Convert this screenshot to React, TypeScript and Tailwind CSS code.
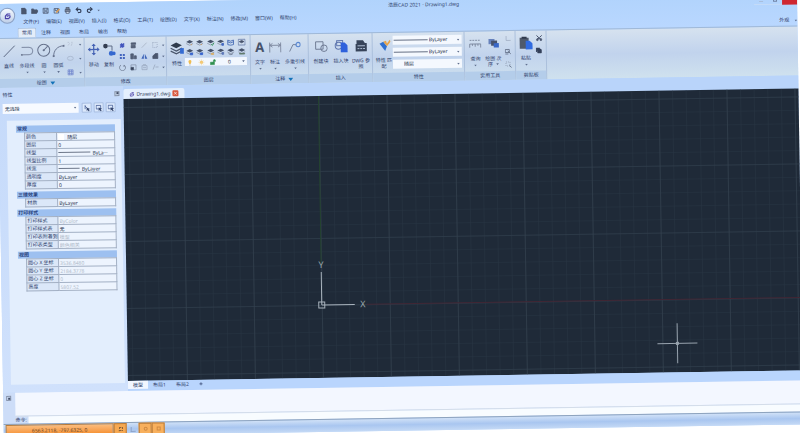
import type { ReactNode } from 'react';
import { Copy, Plus, Redo2, Scissors, Undo2 } from 'lucide-react';

const menus = ['文件(F)', '编辑(E)', '视图(V)', '插入(I)', '格式(O)', '工具(T)', '绘图(D)', '文字(X)', '标注(N)', '修改(M)', '窗口(W)', '帮助(H)'];
const ribbonTabs = ['常用', '注释', '视图', '布局', '输出', '帮助'];

type PropRow = { name: string; value: string; muted?: boolean; swatch?: boolean; line?: 'long' | 'short' };

const propertyGroups: { title: string; rows: PropRow[] }[] = [
  {
    title: '常规',
    rows: [
      { name: '颜色', value: '随层', swatch: true },
      { name: '图层', value: '0' },
      { name: '线型', value: 'ByLa···', line: 'long' },
      { name: '线型比例', value: '1' },
      { name: '线宽', value: 'ByLayer', line: 'short' },
      { name: '透明度', value: 'ByLayer' },
      { name: '厚度', value: '0' },
    ],
  },
  { title: '三维效果', rows: [{ name: '材质', value: 'ByLayer' }] },
  {
    title: '打印样式',
    rows: [
      { name: '打印样式', value: 'ByColor', muted: true },
      { name: '打印样式表', value: '无' },
      { name: '打印表附着到', value: '模型', muted: true },
      { name: '打印表类型', value: '颜色相关', muted: true },
    ],
  },
  {
    title: '视图',
    rows: [
      { name: '圆心 X 坐标', value: '3536.8480', muted: true },
      { name: '圆心 Y 坐标', value: '2184.3778', muted: true },
      { name: '圆心 Z 坐标', value: '0', muted: true },
      { name: '高度', value: '5807.52', muted: true },
    ],
  },
];

function Arrow({ className = '' }: { className?: string }) {
  return (
    <svg viewBox="0 0 4 3" className={`h-[2px] w-[3px] shrink-0 ${className}`} aria-hidden="true">
      <path d="M0 0h4L2 3z" fill="#61708f" />
    </svg>
  );
}

function Logo({ className }: { className: string }) {
  return (
    <svg viewBox="0 0 12 12" className={className} fill="none" aria-hidden="true">
      <path d="M10.500 2H5.500L2 5.500V10h5.500l2.500-2.500V5H6L4.800 6.500" stroke="#4a3fa8" strokeWidth="2" strokeLinejoin="round" />
    </svg>
  );
}

// 功能区面板
function Group({ title, width, more, corner, children }: { title: string; width: string; more?: boolean; corner?: boolean; children: ReactNode }) {
  return (
    <section className={`flex shrink-0 flex-col border-r border-[#abc0dc] ${width}`}>
      <div className="flex flex-1 px-[2px] pt-[3px]">{children}</div>
      <h2 className={`flex h-[9px] items-center justify-center gap-[3px] bg-[#b4cdea] ${more ? 'pl-[9px]' : ''}`}>
        {title}
        {more && (
          <svg viewBox="0 0 6 4" className="h-[4px] w-[5px]" aria-hidden="true">
            <path d="M0 0h6L3 4z" fill="#1272b8" />
          </svg>
        )}
        {corner && <Arrow className="-mr-[44px] ml-[38px]" />}
      </h2>
    </section>
  );
}

function BigButton({ label, second, width, arrow, children }: { label: string; second?: string; width: string; arrow?: boolean; children: ReactNode }) {
  return (
    <button className={`flex shrink-0 flex-col items-center whitespace-nowrap ${width}`}>
      <span className="flex h-[18px] items-center">{children}</span>
      <span className="mt-[3px] leading-[6px]">{label}</span>
      {second && (
        <span className="flex items-center gap-[3px] leading-[6px]">
          {second}
          {arrow && <Arrow />}
        </span>
      )}
      {arrow && !second && <Arrow className="mt-[3px]" />}
    </button>
  );
}

function Glyph({ children, size = 'size-[7px]', label }: { children: ReactNode; size?: string; label: string }) {
  return (
    <button aria-label={label} className="flex items-center justify-center">
      <svg viewBox="0 0 14 14" className={size} fill="none" stroke="#4a566e" strokeWidth="1.500">
        {children}
      </svg>
    </button>
  );
}

function LayerStack({ tone, mark }: { tone: string; mark: ReactNode }) {
  return (
    <>
      <path d="M1 5l6-3 6 3-6 3z" fill="#46526a" stroke="none" />
      <path d="M1 8l6 3 6-3" stroke="#8b96a8" />
      <g stroke={tone} fill={tone}>{mark}</g>
    </>
  );
}

function LayerSelect() {
  return (
    <div className="flex h-[8px] items-center bg-[#f2f7fe] px-[2px]">
      <svg viewBox="0 0 60 14" className="h-[7px] w-[30px] shrink-0" aria-hidden="true">
        <path d="M6 2a3 3 0 0 1 3 3c0 2-1.500 3-1.500 5h-3C4.500 8 3 7 3 5a3 3 0 0 1 3-3z" fill="#efbd52" />
        <path d="M4.500 12h3" stroke="#888" />
        <circle cx="29" cy="7" r="3" fill="#f3bd55" />
        <path d="M29 1v12M23 7h12M25 3l8 8M33 3l-8 8" stroke="#f5cf83" />
        <path d="M47 7h8v5h-8zM53 7V4a2 2 0 0 1 4 0v2" fill="#2f8f4e" stroke="#2f8f4e" />
      </svg>
      <select aria-label="图层" defaultValue="0" className="min-w-0 flex-1 appearance-none text-center text-[#26324e] outline-none">
        <option>0</option>
      </select>
      <Arrow />
    </div>
  );
}

function StyleSelect({ label, value, line }: { label: string; value: string; line?: boolean }) {
  return (
    <div className="flex h-[9px] items-center bg-[#f4f8fe] pr-[2px] pl-[1px]">
      {line ? <span className="h-px w-[34px] bg-[#667085]" /> : <span className="w-[9px]" />}
      <select aria-label={label} defaultValue={value} className="ml-[1px] min-w-0 flex-1 appearance-none text-[#222c44] outline-none">
        <option>{value}</option>
      </select>
      <Arrow />
    </div>
  );
}

function TitleBar() {
  return (
    <div className="flex h-[14px] items-center pt-[1px]">
      <div className="flex items-center gap-[4px] pl-[2px] text-[#35415a]">
        <Glyph label="新建"><path d="M3 1h6l3 3v9H3z" fill="#4a566e" /></Glyph>
        <Glyph label="打开"><path d="M1 12V3h4l1 2h6v2M1 12l3-5h10l-3 5z" fill="#4a566e" /></Glyph>
        <Glyph label="保存"><path d="M2 2h10v10H2zM4 2v4h6V2M4 12V9h6v3" /></Glyph>
        <Glyph label="另存为"><path d="M2 3h9v9H2zM4 3v4h5V3" /><path d="M6 11l7-7" stroke="#dd9b4f" strokeWidth="3" /></Glyph>
        <Glyph label="打印"><path d="M4 5V1h6v4M2 5h10v5H2z" fill="#7a869c" /><path d="M4 9h6v4H4z" fill="#d8e4f5" /></Glyph>
        <button aria-label="撤销"><Undo2 className="size-[7px]" strokeWidth={4} /></button>
        <button aria-label="重做"><Redo2 className="size-[7px]" strokeWidth={4} /></button>
        <Arrow />
      </div>
      <h1 className="flex-1 pl-[288px]">浩辰CAD 2021 - Drawing1.dwg</h1>
      <button aria-label="最小化" className="flex h-[11px] w-[14px] items-end justify-center border-b border-[#c4dbf8] pb-[2px]">
        <span className="h-px w-[4px] bg-[#a9bedc]" />
      </button>
      <button aria-label="还原" className="flex h-[11px] w-[14px] items-end justify-center border-b border-[#c4dbf8] pb-[2px]">
        <span className="size-[4px] border border-[#7184a6]" />
      </button>
      <button aria-label="关闭" className="h-[11px] w-[15px] bg-[#cf2630]" />
    </div>
  );
}

function Ribbon() {
  return (
    <div className="flex h-[50px] shrink-0 border-t border-[#a0b9d8] bg-linear-to-b from-[#d6e2ef] via-[#c1d3ed] to-[#cfe1ee]">
      <Group title="绘图" width="w-[87px]" more>
        <BigButton label="直线" width="w-[18px]">
          <svg viewBox="0 0 14 14" className="size-[13px]"><path d="M1 13L13 1" stroke="#56627c" /></svg>
        </BigButton>
        <BigButton label="多段线" width="w-[18px]" arrow>
          <svg viewBox="0 0 14 14" className="size-[13px]" fill="none" stroke="#76829b"><path d="M1 3h8a4 4 0 0 1 0 8H1" /><path d="M0 10h2v2H0z" fill="#76829b" stroke="none" /></svg>
        </BigButton>
        <BigButton label="圆" width="w-[16px]" arrow>
          <svg viewBox="0 0 14 14" className="size-[14px]" fill="none" stroke="#66728c"><circle cx="7" cy="7" r="6" /><path d="M7 7l4-4" /><circle cx="7" cy="7" r="0.600" /></svg>
        </BigButton>
        <BigButton label="圆弧" width="w-[13px]" arrow>
          <svg viewBox="0 0 14 14" className="size-[13px]" fill="none" stroke="#66728c"><path d="M2 13C2 7 6 2 13 2" /><path d="M1 12h2v2H1zM12 1h2v2h-2z" fill="#66728c" stroke="none" /></svg>
        </BigButton>
        <div className="flex flex-1 flex-col justify-between pb-[2px] pl-[2px]">
          <span className="flex items-center gap-[5px]"><Glyph label="点"><path d="M2 3h3M9 3h3M3 9l3-4M9 10l2-5" stroke="#b3bfd2" /></Glyph><Arrow /></span>
          <span className="flex items-center gap-[5px]"><Glyph label="椭圆"><ellipse cx="7" cy="7" rx="6" ry="4" stroke="#a5b3ca" /></Glyph><Arrow /></span>
          <span className="flex items-center gap-[5px]"><Glyph label="填充"><path d="M2 2h10v10H2zM2 5h10M2 9h10M5 2v10M9 2v10" stroke="#7288ce" /></Glyph><Arrow /></span>
        </div>
      </Group>

      <Group title="修改" width="w-[82px]">
        <BigButton label="移动" width="w-[14px]">
          <svg viewBox="0 0 14 14" className="size-[12px]" fill="#4562b4" stroke="#4562b4"><path d="M7 2v10M2 7h10" strokeWidth="1.400" /><path d="M7 0l2.500 3h-5zM7 14l2.500-3h-5zM0 7l3-2.500v5zM14 7l-3-2.500v5z" stroke="none" /></svg>
        </BigButton>
        <BigButton label="复制" width="w-[16px]">
          <svg viewBox="0 0 14 14" className="size-[13px]"><circle cx="3" cy="3" r="2.500" fill="#333d50" /><path d="M5 3h5v5" fill="none" stroke="#596680" /><circle cx="9" cy="11" r="2.500" fill="#3568cf" /><circle cx="12" cy="11" r="2" fill="#3568cf" /></svg>
        </BigButton>
        <div className="grid flex-1 grid-cols-[11px_11px_11px_16px] grid-rows-3 pb-[4px]">
          <Glyph label="删除"><path d="M3 11l8-8M3 7l4-4M7 11l4-4" stroke="#4255bd" strokeWidth="3" /></Glyph>
          <Glyph label="拉伸"><path d="M3 2h9v3H3zM3 7h8v5H3z" fill="#56627a" /></Glyph>
          <Glyph label="修剪"><path d="M2 12L12 2" stroke="#a6b0c2" /></Glyph>
          <span className="flex items-center justify-center gap-[3px]"><Glyph label="圆角"><path d="M2 2h9v10H2z" stroke="#98a5bc" strokeDasharray="2" /></Glyph><Arrow /></span>
          <Glyph label="阵列"><path d="M2 2h4v4H2zM8 2h4v4H8zM2 8h4v4H2zM8 8h4v4H8z" fill="#4264be" stroke="none" /></Glyph>
          <Glyph label="偏移"><path d="M2 2h5v10H2zM9 6h4v6H9z" fill="#56627a" /></Glyph>
          <Glyph label="镜像"><path d="M6 2v10H1zM8 2v10h5z" fill="#3f65b9" stroke="none" /></Glyph>
          <span className="flex items-center justify-center gap-[3px]"><Glyph label="倒角"><path d="M2 12V7l5-5h5v10z" fill="#4a566e" /></Glyph><Arrow /></span>
          <Glyph label="旋转"><path d="M10 2a6 6 0 1 1-6 0M10 2v4" stroke="#6b7890" /></Glyph>
          <Glyph label="缩放"><path d="M2 2h10v10H2z" stroke="#8592aa" /><path d="M2 7h5v5H2z" fill="#333f58" /></Glyph>
          <Glyph label="打断"><path d="M2 4h10v8H2zM4 2h6M4 8h6" stroke="#98a5bc" /></Glyph>
          <span className="flex items-center justify-center gap-[3px]"><Glyph label="延伸"><path d="M2 12L6 2M7 7h6" stroke="#98a5bc" /></Glyph><Arrow /></span>
        </div>
      </Group>

      <Group title="图层" width="w-[84px]">
        <BigButton label="特性" width="w-[16px]">
          <svg viewBox="0 0 16 14" className="h-[14px] w-[15px]" fill="none"><path d="M1 4l6-3 6 3-6 3z" fill="#2f3b4c" /><path d="M1 7l6 3 6-3M1 10l6 3 6-3" stroke="#4a566c" strokeWidth="1.300" /><path d="M11 7h4v6h-4z" fill="#346bd2" /></svg>
        </BigButton>
        <div className="flex-1 pr-[1px]">
          <div className="grid h-[17px] grid-cols-6 grid-rows-2">
            <Glyph label="关闭图层" size="size-[8px]"><LayerStack tone="#d29a55" mark={<path d="M9 10h2" />} /></Glyph>
            <Glyph label="隔离" size="size-[8px]"><LayerStack tone="#d29a55" mark={<path d="M9 10h2" />} /></Glyph>
            <Glyph label="冻结" size="size-[8px]"><LayerStack tone="#2d9655" mark={<path d="M8 10l2 2 3-5" fill="none" />} /></Glyph>
            <Glyph label="锁定" size="size-[8px]"><LayerStack tone="#4369c4" mark={<path d="M9 9h3v3H9z" />} /></Glyph>
            <Glyph label="匹配" size="size-[8px]"><path d="M2 3l5 2 5-2v8l-5 1-5-1zM2 6l5 2 5-2" stroke="#4369b4" /></Glyph>
            <Glyph label="合并" size="size-[8px]"><path d="M1 2h12v10H1z" stroke="#6f83ad" /><path d="M3 6l4-2 4 2-4 2z" fill="#46526a" /></Glyph>
            <Glyph label="打开图层" size="size-[8px]"><LayerStack tone="#3664ce" mark={<path d="M8 9h4v3H8z" />} /></Glyph>
            <Glyph label="取消隔离" size="size-[8px]"><LayerStack tone="#3664ce" mark={<path d="M8 9h4v3H8z" />} /></Glyph>
            <Glyph label="解冻" size="size-[8px]"><LayerStack tone="#d8ae68" mark={<path d="M8 10h4v2H8z" />} /></Glyph>
            <Glyph label="解锁" size="size-[8px]"><LayerStack tone="#5e79ba" mark={<path d="M9 9h3v3H9z" />} /></Glyph>
            <Glyph label="漫游" size="size-[8px]"><LayerStack tone="#68758c" mark={<path d="M3 11l4 2 4-2" fill="none" />} /></Glyph>
            <Glyph label="上一个" size="size-[8px]"><LayerStack tone="#5d7767" mark={<path d="M3 11h9v1H3z" />} /></Glyph>
          </div>
          <div className="mt-[2px]"><LayerSelect /></div>
        </div>
      </Group>

      <Group title="注释" width="w-[58px]" more>
        <BigButton label="文字" width="w-[14px]" arrow>
          <span className="text-[13px] leading-none font-bold text-[#46526a]">A</span>
        </BigButton>
        <BigButton label="标注" width="w-[16px]" arrow>
          <svg viewBox="0 0 14 12" className="h-[11px] w-[13px]" fill="none" stroke="#7c879d"><path d="M1 1v11M13 1v11M1 4h12M4 2L1 4l3 2M10 2l3 2-3 2" /></svg>
        </BigButton>
        <BigButton label="多重引线" width="w-[24px]" arrow>
          <svg viewBox="0 0 14 14" className="size-[12px]" fill="none"><path d="M1 13l4-8h4" stroke="#6b7790" /><circle cx="11" cy="5" r="2.500" stroke="#5886d0" strokeWidth="1.300" /></svg>
        </BigButton>
      </Group>

      <Group title="插入" width="w-[64px]">
        <BigButton label="创建块" width="w-[20px]">
          <svg viewBox="0 0 14 14" className="size-[13px]" fill="none" stroke="#6b7790"><path d="M1 2h8v8H1z" /><circle cx="10" cy="9" r="3.500" /></svg>
        </BigButton>
        <BigButton label="插入块" width="w-[20px]">
          <svg viewBox="0 0 14 14" className="size-[14px]" fill="none" stroke="#5e75ae"><circle cx="5" cy="7" r="3.500" /><path d="M3 2h6v5H3z" /><path d="M7 4h4l3 3v7H7z" fill="#2f61dc" stroke="none" /></svg>
        </BigButton>
        <BigButton label="DWG 参" second="照" width="w-[20px]">
          <svg viewBox="0 0 14 14" className="size-[13px]"><path d="M2 1h7l2 3h2v9H1V5h1z" fill="#37445a" /><path d="M3 7h8M3 10h2M6 10h2M9 10h2" stroke="#b7c6dd" /></svg>
        </BigButton>
      </Group>

      <Group title="特性" width="w-[92px]" corner>
        <BigButton label="特性 匹" second="配" width="w-[18px]">
          <svg viewBox="0 0 14 14" className="size-[13px]"><path d="M2 5l4-2 4 5-2 5z" fill="#2f70d0" /><path d="M6 3l3-1 1 3 3-4 1 2-4 5z" fill="#e7a54c" /></svg>
        </BigButton>
        <div className="flex flex-1 flex-col gap-[3px]">
          <StyleSelect label="线型" value="ByLayer" line />
          <StyleSelect label="线宽" value="ByLayer" line />
          <StyleSelect label="颜色" value="随层" />
        </div>
      </Group>

      <Group title="实用工具" width="w-[51px]">
        <BigButton label="查询" width="w-[17px]" arrow>
          <svg viewBox="0 0 14 12" className="h-[11px] w-[13px]" fill="none" stroke="#7a869c"><path d="M1 2h12" strokeDasharray="2 1" /><path d="M1 10V6h12v4M4 6v2M7 6v3M10 6v2" /></svg>
        </BigButton>
        <BigButton label="绘图 次" second="序" width="w-[19px]" arrow>
          <svg viewBox="0 0 14 14" className="size-[12px]"><path d="M1 2h7v6H1z" fill="#6681bb" /><path d="M4 4h7v6H4z" fill="#47526c" /><path d="M7 7h6v5H7z" fill="#3967c6" /></svg>
        </BigButton>
        <div className="flex flex-1 flex-col justify-between pt-[1px] pb-[3px]">
          <Glyph label="点坐标"><path d="M3 2v9h9" stroke="#a0adc2" /></Glyph>
          <Glyph label="快速选择"><path d="M1 3h8v6H1zM6 6l6 6M1 12h6" stroke="#56627a" /></Glyph>
          <Glyph label="全选"><path d="M2 2h8v8H2z" strokeDasharray="2" stroke="#8b97ad" /><path d="M9 9l4 4" /></Glyph>
        </div>
      </Group>

      <Group title="剪贴板" width="w-[31px]">
        <BigButton label="粘贴" width="w-[16px]" arrow>
          <svg viewBox="0 0 14 14" className="size-[14px]"><path d="M1 2h9v11H1z" fill="#4f596b" /><path d="M3 1h5v2H3z" fill="#303a4c" /><path d="M7 5h4l3 3v6H7z" fill="#316be0" /></svg>
        </BigButton>
        <div className="flex flex-1 flex-col items-center gap-[6px] pt-[1px] text-[#34405a]">
          <button aria-label="剪切"><Scissors className="size-[7px] -rotate-90" strokeWidth={3} /></button>
          <button aria-label="复制到剪贴板"><Copy className="size-[6px]" strokeWidth={4} fill="currentColor" /></button>
        </div>
      </Group>
    </div>
  );
}

function PropertiesPanel() {
  return (
    <aside className="flex w-[125px] shrink-0 flex-col bg-linear-to-b from-[#c5dafa] to-[#d0e1fc] pr-[3px] pl-[4px]">
      <div className="flex h-[14px] items-center justify-between pr-[1px]">
        <h2>特性</h2>
        <button aria-label="关闭特性" className="flex size-[5px] items-center justify-center border border-[#8793aa] bg-[#cbd9ea]">
          <span className="size-[2px] bg-[#414c66]" />
        </button>
      </div>
      <div className="flex h-[14px] items-center">
        <div className="flex h-[10px] w-[76px] items-center bg-[#f7faff] px-[2px]">
          <select aria-label="选择对象" className="min-w-0 flex-1 appearance-none text-[#26324e] outline-none">
            <option>无选择</option>
          </select>
          <Arrow />
        </div>
        <div className="flex gap-[2px] pl-[3px]">
          {['切换选择', '选择对象', '快速选择'].map((name, i) => (
            <button key={name} aria-label={name} className="flex size-[10px] items-center justify-center rounded-[1px] border border-[#a9bfe2] bg-[#dce9fc]">
              <svg viewBox="0 0 14 14" className="size-[7px]" fill="none" stroke="#3d5691" strokeWidth="1.500">
                {i > 0 && <path d="M1 2h9v7H1z" />}
                {i === 0 && <path d="M3 1v8M3 3l4 4" />}
                <path d="M6 6l7 3-3 1 2 3-2 1-2-3-2 2z" fill="#34456c" stroke="none" />
              </svg>
            </button>
          ))}
        </div>
      </div>
      <div className="mt-[5px] mb-[8px] ml-[4px] flex flex-1 flex-col gap-[2px] bg-[#e3eefd] pt-[5px] pr-[6px] pl-[9px]">
        {propertyGroups.map((group) => (
          <section key={group.title}>
            <h3 className="flex h-[7px] items-center bg-[#9dc0f0] pl-[1px] font-bold text-[#28437f]">{group.title}</h3>
            <table className="ml-[8px] w-[calc(100%-8px)] table-fixed border-collapse">
              <tbody>
                {group.rows.map((row) => (
                  <tr key={row.name} className="h-[8px]">
                    <th scope="row" className="w-[32px] border border-[#a3b0c4] bg-[#dbe7f8] p-0 pl-[1px] text-left font-normal whitespace-nowrap">
                      {row.name}
                    </th>
                    <td className="border border-[#a3b0c4] bg-[#edf4fe] p-0">
                      <div className="flex h-[7px] items-center pl-[1px]">
                        {row.swatch && <span className="mr-[3px] size-[6px] shrink-0 bg-white" />}
                        {row.line === 'long' && <span className="mr-[2px] h-px w-[32px] shrink-0 bg-[#6d778a]" />}
                        {row.line === 'short' && <span className="mr-[2px] h-px w-[21px] shrink-0 bg-[#6d778a]" />}
                        <input
                          aria-label={row.name}
                          defaultValue={row.value}
                          disabled={row.muted}
                          className="h-[7px] w-full min-w-0 leading-none text-[#25304a] outline-none disabled:text-[#b0bac9]"
                        />
                      </div>
                    </td>
                  </tr>
                ))}
              </tbody>
            </table>
          </section>
        ))}
      </div>
    </aside>
  );
}

// 绘图区：网格、坐标轴、UCS 图标和十字光标
function Canvas() {
  return (
    <svg className="min-h-0 w-full flex-1 bg-[#1f2a38]" aria-label="绘图区">
      <defs>
        <pattern id="minor" x="195" y="209" width="13.600" height="13.400" patternUnits="userSpaceOnUse">
          <path d="M0 0H14M0 0V14" stroke="#283543" strokeWidth="1" fill="none" />
        </pattern>
        <pattern id="major" x="195" y="209" width="68" height="67" patternUnits="userSpaceOnUse">
          <path d="M0 0H68M0 0V67" stroke="#344250" strokeWidth="1.200" fill="none" />
        </pattern>
      </defs>
      <rect width="100%" height="100%" fill="url(#minor)" />
      <rect width="100%" height="100%" fill="url(#major)" />
      <path d="M195 0V168" stroke="#24432f" />
      <path d="M240 209H2000" stroke="#412634" />
      <g stroke="#a9b3bd" fill="none">
        <path d="M195 209V176M195 209h33" />
        <path d="M192 206h6v6h-6z" />
      </g>
      <g fill="#9aa6ab" fontSize="9" textAnchor="middle">
        <text x="195" y="172">Y</text>
        <text x="236" y="212">X</text>
      </g>
      <g stroke="#98a3ae">
        <path d="M530 253h40M550 233v40" />
        <path d="M549 252h2v2h-2z" fill="#98a3ae" />
      </g>
    </svg>
  );
}

export default function App() {
  return (
    <div className="h-screen overflow-hidden bg-white">
      <div className="mt-[4px] mr-[3px] -ml-[3px] flex h-full origin-top-left -rotate-[0.9deg] flex-col bg-[#b5d4fd] text-[5px] leading-none text-[#2f3f6b] [font-family:'Noto_Sans','Noto_Sans_CJK_SC',sans-serif]">
        <header className="shrink-0 bg-linear-to-b from-[#b0d3fc] to-[#b9d7ff]">
          <div className="flex">
            <button aria-label="应用程序菜单" className="mt-[4px] ml-[2px] flex size-[16px] shrink-0 items-center justify-center rounded-full border border-[#8ca1c4] bg-linear-to-b from-[#f5f9ff] to-[#bfcfe8]">
              <Logo className="size-[7px]" />
            </button>
            <div className="flex-1 pl-[3px]">
              <TitleBar />
              <nav className="flex h-[9px] items-center gap-[7px] pl-[5px]">
                {menus.map((item) => (
                  <button key={item} className="whitespace-nowrap">{item}</button>
                ))}
              </nav>
            </div>
          </div>
          <div className="flex h-[11px] items-end pl-[20px]">
            {ribbonTabs.map((tab, i) => (
              <button
                key={tab}
                className={`h-[10px] w-[19px] ${i === 0 ? 'rounded-t-[2px] border border-b-0 border-[#a7bedd] bg-[#e3edf9]' : ''}`}
              >
                {tab}
              </button>
            ))}
            <button className="ml-auto flex h-[11px] items-center gap-[5px]">
              外观 <Arrow />
            </button>
          </div>
        </header>

        <Ribbon />

        <main className="flex min-h-0 flex-1">
          <PropertiesPanel />
          <div className="flex min-w-0 flex-1 flex-col">
            <div className="flex h-[13px] items-end bg-[#b9d4fa]">
              <div className="flex h-[10px] items-center gap-[2px] rounded-t-[2px] bg-[#e4effd] px-[6px]">
                <Logo className="size-[5px]" />
                <button className="text-[#2c3958]">Drawing1.dwg</button>
                <button aria-label="关闭 Drawing1.dwg" className="flex size-[6px] items-center justify-center rounded-[1px] bg-[#d8583e]">
                  <svg viewBox="0 0 6 6" className="size-[4px]" stroke="#fff"><path d="M1 1l4 4M5 1L1 5" /></svg>
                </button>
              </div>
            </div>
            <Canvas />
            <div className="flex h-[10px] items-start bg-[#b9d5fd]">
              <button className="h-[8px] w-[20px] bg-[#f1f6ff]">模型</button>
              <button className="h-[8px] w-[23px]">布局1</button>
              <button className="h-[8px] w-[23px]">布局2</button>
              <button aria-label="新建布局" className="flex h-[8px] w-[14px] items-center justify-center">
                <Plus className="size-[4px]" strokeWidth={4} />
              </button>
            </div>
          </div>
        </main>

        <div className="flex h-[31px] shrink-0 bg-[#cdddf8]">
          <div className="w-[12px] shrink-0 pt-[3px] pl-[3px]">
            <button aria-label="关闭命令行" className="flex size-[5px] items-center justify-center border border-[#8793aa]">
              <span className="size-[2px] bg-[#414c66]" />
            </button>
          </div>
          <div className="flex flex-1 flex-col">
            <div className="flex-1 bg-[#f3f7ff]" />
            <div className="flex h-[8px] items-center border-t border-[#d4dde9]">
              <label htmlFor="command" className="w-[13px] shrink-0 whitespace-nowrap">命令:</label>
              <input id="command" className="h-[7px] min-w-0 flex-1 bg-[#f8fcff] outline-none" />
            </div>
          </div>
        </div>

        <footer className="flex h-[13px] shrink-0 items-stretch border-t border-[#8ea3bd] bg-linear-to-b from-[#d0e1f7] via-[#a9c6f0] to-[#c4d9f5]">
          <div className="ml-[2px] flex w-[108px] items-center justify-center border border-[#b97b38] bg-linear-to-b from-[#fbbd7d] to-[#f58d24] text-[#6a4523]">
            6563.2118, -797.6325, 0
          </div>
          <button aria-label="捕捉" className="flex w-[13px] items-center justify-center border border-[#b97b38] bg-[#f6a851]">
            <span className="size-[4px] border border-dotted border-[#8a6238]" />
          </button>
          <button aria-label="正交" className="flex w-[12px] items-center justify-center">
            <span className="size-[5px] border-b border-l border-[#8da3c9]" />
          </button>
          <button aria-label="极轴" className="flex w-[13px] items-center justify-center border border-[#b97b38] bg-[#f8b05d]">
            <span className="size-[4px] rounded-full border border-[#d08a42]" />
          </button>
          <button aria-label="对象捕捉" className="flex w-[13px] items-center justify-center border border-[#b97b38] bg-[#f8b05d]">
            <span className="size-[4px] border border-[#d08a42]" />
          </button>
        </footer>
      </div>
    </div>
  );
}
